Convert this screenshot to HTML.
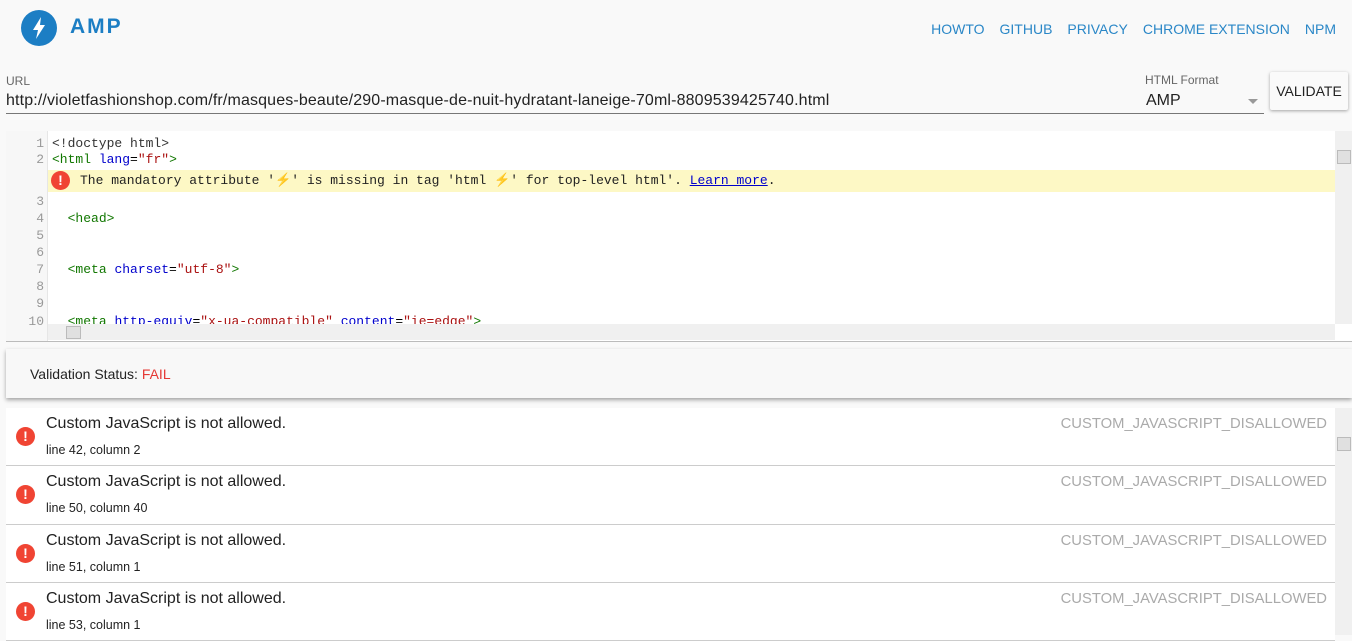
<!DOCTYPE html>
<html><head><style>
*{box-sizing:border-box}
body{margin:0;width:1352px;height:635px;overflow:hidden;background:#f9f9f9;font-family:"Liberation Sans",Arial,sans-serif;position:relative}
.a{position:absolute}
.nav a{color:#2a87c7;font-size:14px;text-decoration:none;margin-left:15px}
.mono{font-family:"Liberation Mono",monospace;font-size:13px;white-space:pre}
.ln{position:absolute;left:6px;width:38px;text-align:right;color:#999;font-family:"Liberation Mono",monospace;font-size:13px}
.cl{position:absolute;left:52px}
.t{color:#170}.at{color:#00c}.s{color:#a11}
.row{position:absolute;left:6px;width:1329px;height:58px;background:#fff;border-bottom:1px solid #ccc}
.ic{position:absolute;left:10px;top:19px;width:19px;height:19px;border-radius:50%;background:#f04433;color:#fff;font-weight:bold;font-size:14px;text-align:center;line-height:19px}
.m{position:absolute;left:40px;top:7px;font-size:16px;color:#222}
.lc{position:absolute;left:40px;top:35px;font-size:12.5px;color:#222}
.c{position:absolute;right:8px;top:8px;font-size:14.8px;color:#aaa}
</style></head><body>
<svg class="a" style="left:21px;top:10px" width="36" height="36" viewBox="0 0 36 36"><circle cx="18" cy="18" r="18" fill="#1c7ec4"/><path d="M20 7 L12 20 H17 L15 29 L24 15 H19 Z" fill="#fff"/></svg>
<div class="a" style="left:70px;top:15px;font-size:21px;font-weight:bold;color:#1c7ec4;letter-spacing:2px">AMP</div>
<div class="a nav" style="right:16px;top:21px"><a>HOWTO</a><a>GITHUB</a><a>PRIVACY</a><a>CHROME EXTENSION</a><a>NPM</a></div>
<div class="a" style="left:6px;top:74px;font-size:12px;color:#666">URL</div>
<div class="a" style="left:6px;top:92px;font-size:16px;color:#222;letter-spacing:0.14px">http://violetfashionshop.com/fr/masques-beaute/290-masque-de-nuit-hydratant-laneige-70ml-8809539425740.html</div>
<div class="a" style="left:6px;top:113px;width:1258px;height:1px;background:#777"></div>
<div class="a" style="left:1145px;top:73px;font-size:12px;color:#666">HTML Format</div>
<div class="a" style="left:1146px;top:92px;font-size:16px;color:#222">AMP</div>
<div class="a" style="left:1248px;top:99px;width:0;height:0;border-left:5px solid transparent;border-right:5px solid transparent;border-top:5px solid #999"></div>
<div class="a" style="left:1270px;top:72px;width:78px;height:38px;background:#fafafa;box-shadow:0 1px 3px rgba(0,0,0,.35);border-radius:2px;font-size:14px;color:#222;text-align:center;line-height:38px">VALIDATE</div>
<div class="a" style="left:6px;top:131px;width:1346px;height:211px;background:#fff;overflow:hidden;border-bottom:1px solid #bbb">
 <div class="a" style="left:0;top:0;width:42px;height:210px;background:#f7f7f7;border-right:1px solid #e6e6e6"></div>
</div>
<div class="a" style="left:48px;top:170px;width:1287px;height:22px;background:#fdf8c5"></div>
<div class="a" style="left:51px;top:171px;width:19px;height:19px;border-radius:50%;background:#f04433;color:#fff;font-weight:bold;font-size:14px;text-align:center;line-height:19px">!</div>
<div class="ln" style="top:136px">1</div><div class="cl mono" style="top:136px;color:#333">&lt;!doctype html&gt;</div>
<div class="ln" style="top:152px">2</div><div class="cl mono" style="top:152px"><span class="t">&lt;html</span> <span class="at">lang</span>=<span class="s">"fr"</span><span class="t">&gt;</span></div>
<div class="a mono" style="left:80px;top:173px;color:#222">The mandatory attribute '<span style="color:#f5b800">⚡</span>' is missing in tag 'html <span style="color:#f5b800">⚡</span>' for top-level html'. <span style="color:#00c;text-decoration:underline">Learn more</span>.</div>
<div class="ln" style="top:194px">3</div>
<div class="ln" style="top:211px">4</div><div class="cl mono" style="top:211px">  <span class="t">&lt;head&gt;</span></div>
<div class="ln" style="top:228px">5</div>
<div class="ln" style="top:245px">6</div>
<div class="ln" style="top:262px">7</div><div class="cl mono" style="top:262px">  <span class="t">&lt;meta</span> <span class="at">charset</span>=<span class="s">"utf-8"</span><span class="t">&gt;</span></div>
<div class="ln" style="top:279px">8</div>
<div class="ln" style="top:296px">9</div>
<div class="ln" style="top:314px">10</div><div class="cl mono" style="top:314px">  <span class="t">&lt;meta</span> <span class="at">http-equiv</span>=<span class="s">"x-ua-compatible"</span> <span class="at">content</span>=<span class="s">"ie=edge"</span><span class="t">&gt;</span></div>
<div class="a" style="left:48px;top:324px;width:1287px;height:16px;background:#f0f0f0"></div>
<div class="a" style="left:66px;top:326px;width:15px;height:13px;background:#e0e0e0;border:1px solid #bbb"></div>
<div class="a" style="left:1335px;top:131px;width:17px;height:193px;background:#f0f0f0"></div>
<div class="a" style="left:1337px;top:150px;width:14px;height:14px;background:#e0e0e0;border:1px solid #bbb"></div>
<div class="a" style="left:6px;top:349px;width:1346px;height:49px;background:#f8f8f8;box-shadow:0 2px 4px rgba(0,0,0,.35)"></div>
<div class="a" style="left:30px;top:366px;font-size:14px;color:#222">Validation Status: <span style="color:#e53935">FAIL</span></div>
<div class="a" style="left:1335px;top:408px;width:17px;height:227px;background:#f0f0f0"></div>
<div class="a" style="left:1337px;top:437px;width:14px;height:14px;background:#e0e0e0;border:1px solid #bbb"></div>
<div class="row" style="top:408px"><div class="ic">!</div><div class="m">Custom JavaScript is not allowed.</div><div class="lc">line 42, column 2</div><div class="c">CUSTOM_JAVASCRIPT_DISALLOWED</div></div>
<div class="row" style="top:466px;height:59px"><div class="ic">!</div><div class="m">Custom JavaScript is not allowed.</div><div class="lc">line 50, column 40</div><div class="c">CUSTOM_JAVASCRIPT_DISALLOWED</div></div>
<div class="row" style="top:525px"><div class="ic">!</div><div class="m">Custom JavaScript is not allowed.</div><div class="lc">line 51, column 1</div><div class="c">CUSTOM_JAVASCRIPT_DISALLOWED</div></div>
<div class="row" style="top:583px"><div class="ic">!</div><div class="m">Custom JavaScript is not allowed.</div><div class="lc">line 53, column 1</div><div class="c">CUSTOM_JAVASCRIPT_DISALLOWED</div></div>
</body></html>
